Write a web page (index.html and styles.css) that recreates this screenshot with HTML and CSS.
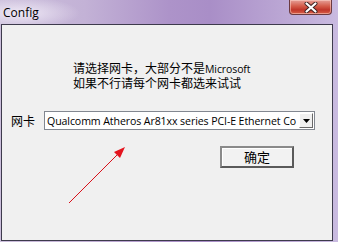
FILE: index.html
```html
<!DOCTYPE html>
<html>
<head>
<meta charset="utf-8">
<link rel="stylesheet" href="styles.css">
</head>
<body>
<div class="window">
  <div class="titlebar">
    <span class="title">Config</span>
    <div class="close">
      <svg width="16" height="11" viewBox="0 0 16 11"><path d="M3.5 1.5 L12.5 9.5 M12.5 1.5 L3.5 9.5" stroke="#3a2020" stroke-width="4" stroke-linecap="round"/><path d="M3.5 1.5 L12.5 9.5 M12.5 1.5 L3.5 9.5" stroke="#ffffff" stroke-width="2.2" stroke-linecap="round"/></svg>
    </div>
  </div>
  <div class="client">
    <div class="msg">
      <div>请选择网卡，大部分不是<span class="latin">Microsoft</span></div>
      <div>如果不行请每个网卡都选来试试</div>
    </div>
    <div class="row">
      <span class="label">网卡</span>
      <div class="combo">
        <span class="combo-text">Qualcomm Atheros Ar81xx series PCI-E Ethernet Co</span>
        <span class="combo-btn"><svg width="7" height="4" viewBox="0 0 7 4"><path d="M0 0 H7 L3.5 4 Z" fill="#000"/></svg></span>
      </div>
    </div>
    <div class="btnrow">
      <div class="okbtn">确定</div>
    </div>
    <svg class="arrow" width="70" height="70" viewBox="0 0 70 70">
      <path d="M3 57 L52 8" stroke="#d8101a" stroke-width="1"/>
      <path d="M59 1 L48 6 L54 12 Z" fill="#e4141e"/>
    </svg>
  </div>
</div>
</body>
</html>
```
FILE: styles.css
```css
html, body {
  margin: 0;
  padding: 0;
}
body {
  width: 338px;
  height: 242px;
  overflow: hidden;
  background: linear-gradient(90deg, #cbbedb 0%, #c3b2d6 25%, #ad93c9 50%, #a98ec7 62%, #bca8d5 85%, #c9bbe0 100%);
}
.window {
  position: relative;
  display: flex;
  flex-direction: column;
  width: 338px;
  height: 242px;
}
.titlebar {
  height: 24px;
  display: flex;
  align-items: flex-start;
  background: radial-gradient(ellipse 60px 16px at 20px 13px, rgba(245,240,250,0.85), rgba(245,240,250,0) 100%);
}
.title {
  font-family: "Open Sans", "Noto Sans", sans-serif;
  font-size: 12px;
  color: #000;
  margin: 5px 0 0 3px;
  line-height: 16px;
}
.close {
  margin-left: auto;
  margin-right: 6px;
  width: 41px;
  height: 14px;
  border: 1px solid #6b3a40;
  border-top: none;
  border-radius: 0 0 4px 4px;
  background: linear-gradient(180deg, #e6a098 0%, #d35a48 45%, #c0362a 70%, #d8604a 100%);
  display: flex;
  align-items: center;
  justify-content: center;
  box-shadow: inset 0 0 0 1px rgba(255,220,210,0.5);
}
.close svg {
  display: block;
}
.client {
  position: relative;
  margin: 0 5px 1px 1px;
  flex: 1;
  border: 1px solid #3d3a4c;
  background: #f0f0f0;
  font-family: "Noto Sans CJK SC", sans-serif;
  font-size: 12px;
  color: #000;
}
.msg {
  margin: 36px 0 0 71px;
  line-height: 14px;
}
.latin {
  font-family: "Open Sans", "Noto Sans", sans-serif;
  font-size: 10.5px;
  letter-spacing: -0.1px;
}
.row {
  margin-top: 21px;
  display: flex;
  align-items: center;
  padding-left: 9px;
}
.label {
  width: 33px;
  line-height: 14px;
}
.combo {
  width: 269px;
  height: 17px;
  display: flex;
  align-items: center;
  border: 1px solid #828790;
  background: #fff;
}
.combo-text {
  flex: 1;
  font-family: "Open Sans", "Noto Sans", sans-serif;
  font-size: 10.6px;
  padding-left: 2px;
  white-space: nowrap;
  overflow: hidden;
  letter-spacing: -0.1px;
}
.combo-btn {
  width: 14px;
  height: 15px;
  margin-right: 1px;
  display: flex;
  align-items: center;
  justify-content: center;
  background: #f0f0f0;
  border-top: 1px solid #ffffff;
  border-left: 1px solid #ffffff;
  border-right: 1px solid #696969;
  border-bottom: 1px solid #696969;
  box-sizing: border-box;
}
.combo-btn svg {
  display: block;
}
.btnrow {
  margin-top: 16px;
  padding-left: 218px;
}
.okbtn {
  width: 70px;
  height: 18px;
  border-top: 2px solid #8a8a8a;
  border-left: 2px solid #8a8a8a;
  border-right: 2px solid #5a5a5a;
  border-bottom: 2px solid #5a5a5a;
  background: #f2f2f2;
  text-align: center;
  font-size: 13px;
  line-height: 18px;
  box-shadow: inset 1px 1px 0 #ffffff;
}
.arrow {
  position: absolute;
  left: 64px;
  top: 121px;
}
```
